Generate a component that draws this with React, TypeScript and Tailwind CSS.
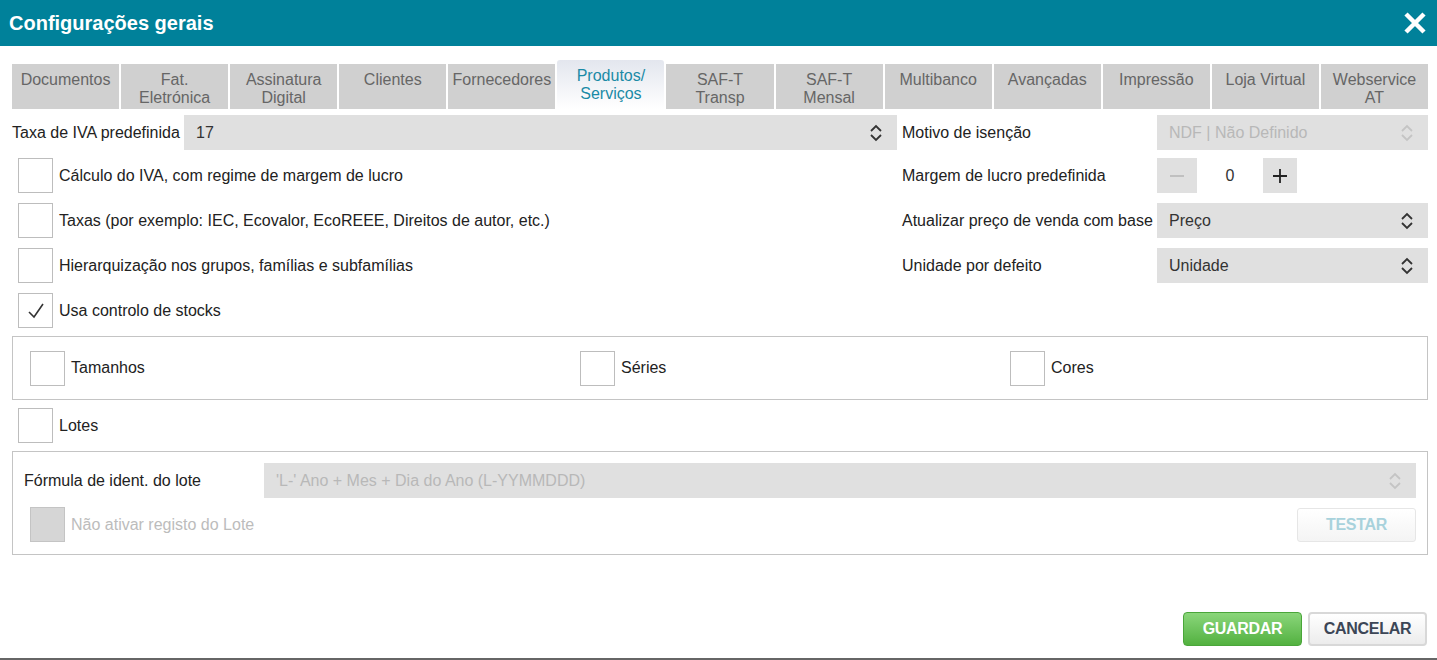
import React, { useState } from 'react';

const font = { fontFamily: '"Liberation Sans", Arial, sans-serif' };

const tabs = [
  'Documentos',
  'Fat.\nEletrónica',
  'Assinatura\nDigital',
  'Clientes',
  'Fornecedores',
  'Produtos/\nServiços',
  'SAF-T\nTransp',
  'SAF-T\nMensal',
  'Multibanco',
  'Avançadas',
  'Impressão',
  'Loja Virtual',
  'Webservice\nAT',
];

const Chevrons: React.FC<{ light?: boolean }> = ({ light }) => (
  <svg width="14" height="20" viewBox="0 0 14 20" className={light ? 'text-[#c4c4c4]' : 'text-[#333]'}>
    <path d="M2 8 L7 3 L12 8" fill="none" stroke="currentColor" strokeWidth="1.8" />
    <path d="M2 12 L7 17 L12 12" fill="none" stroke="currentColor" strokeWidth="1.8" />
  </svg>
);

const Select: React.FC<{ value: string; disabled?: boolean; className?: string }> = ({
  value,
  disabled,
  className,
}) => (
  <div
    className={`h-[35px] bg-[#e0e0e0] flex items-center justify-between pl-3 pr-[14px] text-[16px] ${
      disabled ? 'text-[#b8b8b8]' : 'text-[#333]'
    } ${className ?? ''}`}
  >
    <span className="pt-[1px]">{value}</span>
    <Chevrons light={disabled} />
  </div>
);

const Check: React.FC<{ checked?: boolean; disabled?: boolean; onClick?: () => void }> = ({
  checked,
  disabled,
  onClick,
}) => (
  <div
    onClick={onClick}
    className={`w-[35px] h-[35px] shrink-0 border flex items-center justify-center ${
      disabled ? 'bg-[#d6d6d6] border-[#c4c4c4]' : 'bg-white border-[#bdbdbd]'
    }`}
  >
    {checked && (
      <svg width="20" height="20" viewBox="0 0 20 20">
        <path d="M3 11 L8 16 L17 3" fill="none" stroke="#333" strokeWidth="1.6" />
      </svg>
    )}
  </div>
);

export default function App() {
  const [checks, setChecks] = useState({
    calc: false,
    taxas: false,
    hier: false,
    stocks: true,
  });
  const toggle = (k: keyof typeof checks) => setChecks({ ...checks, [k]: !checks[k] });

  return (
    <div className="w-[1437px] h-[660px] bg-white relative overflow-hidden" style={font}>
      {/* header */}
      <div className="h-[46px] bg-[#00819a] flex items-center justify-between pl-[9px] pr-[10px]">
        <h1 className="text-white text-[20px] font-bold">Configurações gerais</h1>
        <svg width="24" height="24" viewBox="0 0 24 24">
          <path d="M3 3 L21 21 M21 3 L3 21" stroke="white" strokeWidth="4.5" />
        </svg>
      </div>

      {/* tabs */}
      <div className="flex gap-[2px] ml-[12px] mr-[9px] mt-[14px] items-end h-[49px]">
        {tabs.map((t, i) =>
          i === 5 ? (
            <div
              key={t}
              className="flex-1 h-[49px] rounded-t-[3px] bg-gradient-to-b from-[#e3e6ee] to-white text-[#1a8aa6] text-[16px] leading-[18px] text-center pt-[7px] whitespace-pre-line"
            >
              {t}
            </div>
          ) : (
            <div
              key={t}
              className="flex-1 h-[45px] bg-[#d0d0d0] text-[#666] text-[16px] leading-[18px] text-center pt-[7px] whitespace-pre-line"
            >
              {t}
            </div>
          )
        )}
      </div>

      {/* main form */}
      <div className="pl-[12px] pr-[9px] pt-[6px]">
        <div className="flex gap-[5px]">
          {/* left column */}
          <div className="w-[885px] flex flex-col">
            <div className="flex items-center h-[35px]">
              <span className="text-[16px] text-[#222] w-[172px] whitespace-nowrap">Taxa de IVA predefinida</span>
              <Select value="17" className="flex-1" />
            </div>
            <div className="flex flex-col gap-[10px] mt-[8px] pl-[6px]">
              {[
                ['calc', 'Cálculo do IVA, com regime de margem de lucro'],
                ['taxas', 'Taxas (por exemplo: IEC, Ecovalor, EcoREEE, Direitos de autor, etc.)'],
                ['hier', 'Hierarquização nos grupos, famílias e subfamílias'],
                ['stocks', 'Usa controlo de stocks'],
              ].map(([k, label]) => (
                <div key={k} className="flex items-center gap-[6px] h-[35px]">
                  <Check
                    checked={checks[k as keyof typeof checks]}
                    onClick={() => toggle(k as keyof typeof checks)}
                  />
                  <span className="text-[16px] text-[#222]">{label}</span>
                </div>
              ))}
            </div>
          </div>

          {/* right column */}
          <div className="flex-1 flex flex-col gap-[10px]">
            <div className="flex items-center h-[35px]">
              <span className="text-[16px] text-[#222] w-[255px]">Motivo de isenção</span>
              <Select value="NDF | Não Definido" disabled className="flex-1" />
            </div>
            <div className="flex items-center h-[35px] -mt-[2px]">
              <span className="text-[16px] text-[#222] w-[255px]">Margem de lucro predefinida</span>
              <div className="flex h-[35px] bg-[#e0e0e0]">
                <div className="w-[40px] flex items-center justify-center">
                  <div className="w-[14px] h-[2px] bg-[#c0c0c0]" />
                </div>
                <div className="w-[66px] bg-white flex items-center justify-center text-[16px] text-[#333]">
                  0
                </div>
                <div className="w-[34px] flex items-center justify-center">
                  <svg width="14" height="14" viewBox="0 0 14 14">
                    <path d="M7 0 V14 M0 7 H14" stroke="#222" strokeWidth="1.8" />
                  </svg>
                </div>
              </div>
            </div>
            <div className="flex items-center h-[35px]">
              <span className="text-[16px] text-[#222] w-[255px] whitespace-nowrap">
                Atualizar preço de venda com base
              </span>
              <Select value="Preço" className="flex-1" />
            </div>
            <div className="flex items-center h-[35px]">
              <span className="text-[16px] text-[#222] w-[255px]">Unidade por defeito</span>
              <Select value="Unidade" className="flex-1" />
            </div>
          </div>
        </div>

        {/* stock variants box */}
        <div className="mt-[8px] h-[64px] border border-[#c4c4c4] flex items-center px-[17px]">
          <div className="flex items-center gap-[6px] w-[550px]">
            <Check />
            <span className="text-[16px] text-[#222]">Tamanhos</span>
          </div>
          <div className="flex items-center gap-[6px] w-[430px]">
            <Check />
            <span className="text-[16px] text-[#222]">Séries</span>
          </div>
          <div className="flex items-center gap-[6px]">
            <Check />
            <span className="text-[16px] text-[#222]">Cores</span>
          </div>
        </div>

        <div className="flex items-center gap-[6px] h-[35px] mt-[8px] pl-[6px]">
          <Check />
          <span className="text-[16px] text-[#222]">Lotes</span>
        </div>

        {/* lote box */}
        <div className="mt-[8px] h-[104px] border border-[#c4c4c4] px-[11px] pt-[11px]">
          <div className="flex items-center h-[35px]">
            <span className="text-[16px] text-[#222] w-[240px]">Fórmula de ident. do lote</span>
            <Select value="'L-' Ano + Mes + Dia do Ano (L-YYMMDDD)" disabled className="flex-1" />
          </div>
          <div className="flex items-center justify-between mt-[9px] pl-[6px]">
            <div className="flex items-center gap-[6px]">
              <Check disabled />
              <span className="text-[16px] text-[#bcbcbc]">Não ativar registo do Lote</span>
            </div>
            <button className="w-[119px] h-[34px] rounded-[3px] border border-[#e6e6e6] bg-gradient-to-b from-white to-[#f4f4f4] text-[16px] font-bold text-[#a8d2dc] tracking-[-0.3px]">
              TESTAR
            </button>
          </div>
        </div>
      </div>

      {/* footer */}
      <div className="flex justify-end gap-[6px] pr-[10px] mt-[57px]">
        <button className="w-[119px] h-[34px] rounded-[4px] border border-[#4aa63a] bg-gradient-to-b from-[#8ad67a] to-[#52b13f] text-white text-[16px] font-bold tracking-[-0.3px]">
          GUARDAR
        </button>
        <button className="w-[119px] h-[34px] rounded-[4px] border-2 border-[#d8d8d8] bg-gradient-to-b from-white to-[#ececec] text-[#3c4656] text-[16px] font-bold tracking-[-0.3px]">
          CANCELAR
        </button>
      </div>
      <div className="absolute bottom-0 left-0 right-0 h-[2px] bg-[#666]" />
    </div>
  );
}
